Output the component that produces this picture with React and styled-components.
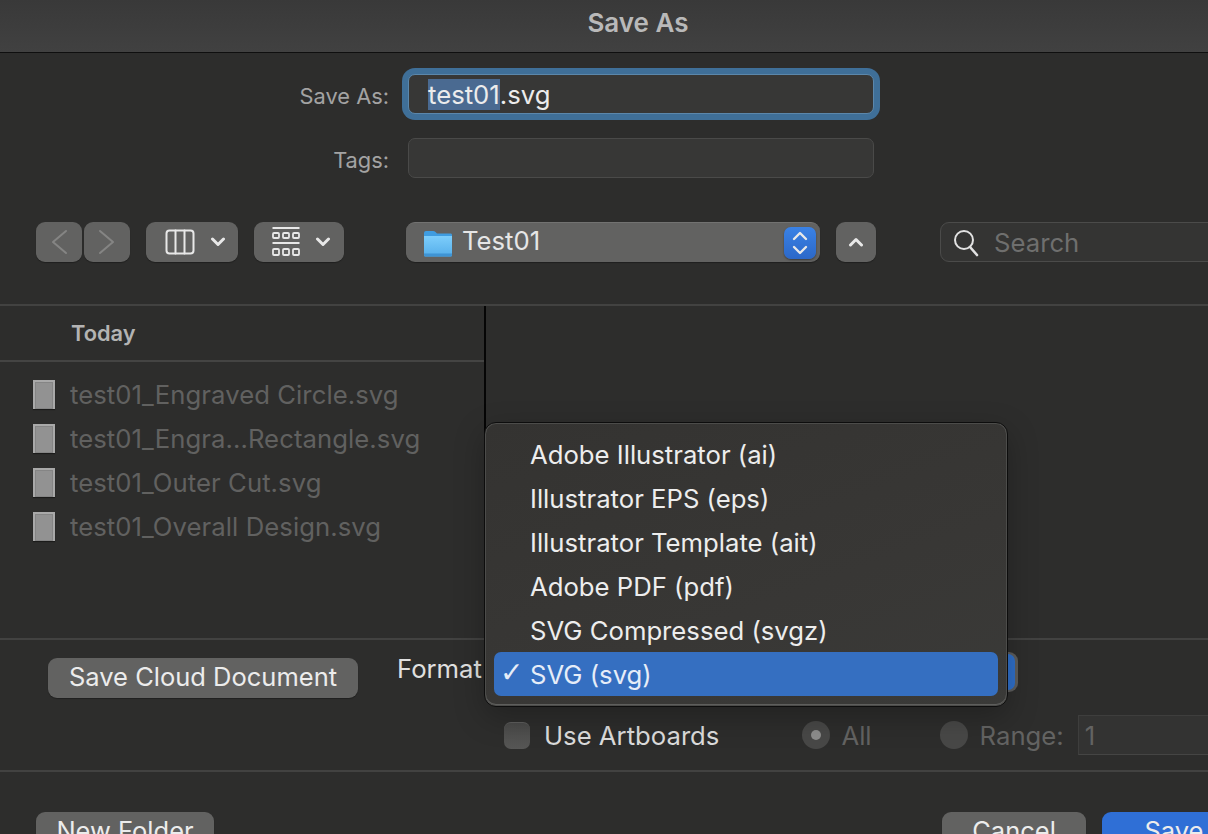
import React from "react";
import styled, { createGlobalStyle } from "styled-components";

const GlobalStyle = createGlobalStyle`
  html, body {
    margin: 0;
    padding: 0;
    background: #2d2d2c;
  }
  * {
    box-sizing: border-box;
  }
`;

const Dialog = styled.div`
  position: relative;
  width: 1208px;
  height: 834px;
  overflow: hidden;
  background: #2d2d2c;
  color: #e4e4e4;
  font-family: Inter, "Liberation Sans", sans-serif;
  font-size: 25.7px;
  white-space: nowrap;
`;

const TitleBar = styled.div`
  height: 53px;
  display: flex;
  align-items: center;
  justify-content: center;
  padding: 0 0 7px 68px;
  background: linear-gradient(#393939, #414141);
  border-bottom: 1px solid #0f0f0f;
  color: #b9b9b9;
  font-size: 26px;
  font-weight: 600;
`;

const FormRow = styled.div`
  display: flex;
  align-items: center;
  height: 40px;
  margin-top: ${(p) => p.$top}px;
`;

const FieldLabel = styled.div`
  width: 389px;
  padding-top: 3px;
  text-align: right;
  margin-right: 19px;
  color: #a3a3a3;
  font-size: 21.8px;
`;

const TextField = styled.div`
  width: 466px;
  height: 40px;
  display: flex;
  align-items: center;
  padding: 1px 0 0 19px;
  border-radius: 7px;
  background: #373736;
  border: 1px solid ${(p) => (p.$focus ? "#5b87ab" : "#4a4a49")};
  box-shadow: ${(p) => (p.$focus ? "0 0 0 6px #3f6f98" : "none")};
  color: #ececec;
`;

const Selected = styled.span`
  background: #4a6a91;
`;

const Toolbar = styled.div`
  display: flex;
  align-items: center;
  height: 40px;
  margin-top: 44px;
  padding-left: 36px;
`;

const ToolButton = styled.div`
  width: ${(p) => p.$w}px;
  height: 40px;
  margin-right: ${(p) => p.$gap || 0}px;
  padding-left: ${(p) => p.$shift || 0}px;
  flex: none;
  display: flex;
  align-items: center;
  justify-content: center;
  gap: ${(p) => p.$inner || 0}px;
  border-radius: 9px;
  background: #626261;
  box-shadow: 0 1px 1px rgba(0, 0, 0, 0.3);
`;

const PathSelect = styled.div`
  width: 414px;
  height: 40px;
  margin-right: 16px;
  flex: none;
  display: flex;
  align-items: center;
  padding: 0 4px 0 17px;
  border-radius: 9px;
  background: #626261;
  border-top: 1px solid #727271;
  box-shadow: 0 1px 1px rgba(0, 0, 0, 0.3);
`;

const PathName = styled.div`
  flex: 1;
  margin-left: 9px;
  margin-top: -4px;
  color: #e6e6e6;
`;

const Stepper = styled.div`
  width: 32px;
  height: 32px;
  display: flex;
  align-items: center;
  justify-content: center;
  border-radius: 7px;
  background: linear-gradient(#3a82e6, #2c68c8);
  box-shadow: 0 1px 2px rgba(0, 0, 0, 0.4);
`;

const SearchField = styled.div`
  width: 300px;
  height: 40px;
  margin-left: 64px;
  flex: none;
  display: flex;
  align-items: center;
  gap: 15px;
  padding: 1px 0 0 12px;
  border-radius: 9px;
  background: #343433;
  border: 1px solid #4b4b4a;
  color: #6f6f6e;
`;

const Separator = styled.div`
  height: 2px;
  background: #424241;
  margin-top: ${(p) => p.$top || 0}px;
`;

const Browser = styled.div`
  display: flex;
  height: 332px;
`;

const ListColumn = styled.div`
  width: 484px;
  flex: none;
`;

const ColumnDivider = styled.div`
  width: 2px;
  flex: none;
  background: #050505;
`;

const GroupHeader = styled.div`
  height: 56px;
  display: flex;
  align-items: center;
  padding-left: 71px;
  margin-bottom: 10px;
  border-bottom: 2px solid #444443;
  color: #b3b3b3;
  font-size: 21.8px;
  font-weight: 600;
`;

const FileRow = styled.div`
  height: 44px;
  display: flex;
  align-items: center;
  padding-left: 33px;
  gap: 15px;
  color: #616160;
  letter-spacing: 0.06px;
`;

const FileIcon = styled.div`
  width: 22px;
  height: 29px;
  padding: 2px;
  background: #a9a9a9;
  box-shadow: 0 1px 1px rgba(0, 0, 0, 0.4);

  &::before {
    content: "";
    display: block;
    height: 100%;
    background: #929292;
    border: 1px solid #858585;
  }
`;

const FormatRow = styled.div`
  display: flex;
  align-items: flex-start;
  height: 75px;
  padding-left: 48px;
  padding-top: 18px;
`;

const PlainButton = styled.div`
  width: ${(p) => p.$w}px;
  height: 40px;
  margin-left: ${(p) => p.$left || 0}px;
  padding-bottom: 3px;
  flex: none;
  display: flex;
  align-items: center;
  justify-content: center;
  border-radius: 9px;
  background: ${(p) => (p.$primary ? "#2f6fd6" : "#626261")};
  box-shadow: 0 1px 1px rgba(0, 0, 0, 0.3);
  color: #ececec;
  font-size: 25.5px;
`;

const FormatLabel = styled.div`
  margin-left: 39px;
  margin-top: -5px;
  color: #e0e0e0;
`;

const FormatSelect = styled.div`
  width: 528px;
  height: 40px;
  margin-left: 8px;
  margin-top: -6px;
  flex: none;
  display: flex;
  justify-content: flex-end;
  padding: 2px 3px 2px 0;
  border-radius: 9px;
  background: #5d5d5c;

  &::after {
    content: "";
    width: 30px;
    border-radius: 7px;
    background: #2f6fc9;
  }
`;

const OptionsRow = styled.div`
  display: flex;
  align-items: center;
  height: 40px;
  padding-left: 504px;
`;

const Checkbox = styled.div`
  width: 26px;
  height: 27px;
  flex: none;
  border-radius: 7px;
  background: linear-gradient(#4a4a49, #575756);
  border-top: 1px solid #5f5f5e;
`;

const OptionText = styled.div`
  margin-left: ${(p) => p.$left}px;
  color: ${(p) => (p.$dim ? "#636362" : "#dcdcdc")};
`;

const Radio = styled.div`
  width: 28px;
  height: 28px;
  flex: none;
  margin-left: ${(p) => p.$left}px;
  display: flex;
  align-items: center;
  justify-content: center;
  border-radius: 50%;
  background: #484847;

  &::after {
    content: "";
    width: 10px;
    height: 10px;
    border-radius: 50%;
    background: ${(p) => (p.$on ? "#8d8d8c" : "transparent")};
  }
`;

const RangeInput = styled.div`
  width: 160px;
  height: 40px;
  flex: none;
  margin-left: 14px;
  padding-left: 6px;
  display: flex;
  align-items: center;
  background: #333332;
  border-top: 1px solid #3e3e3d;
  border-bottom: 1px solid #454544;
  border-left: 1px solid #3e3e3d;
  color: #636362;
`;

const ActionRow = styled.div`
  display: flex;
  align-items: flex-start;
  padding: 40px 0 0 36px;
`;

const Popup = styled.div`
  position: absolute;
  left: 484px;
  top: 422px;
  width: 524px;
  height: 285px;
  padding: 9px 9px;
  border-radius: 12px;
  background: linear-gradient(160deg, #343331, #383735 60%, #3a3a38);
  border: 1px solid #0d0d0d;
  box-shadow: inset 0 0 0 1px #4c4c4a, inset 0 -1px 0 1px #5e5e5c, 0 10px 30px rgba(0, 0, 0, 0.25);
`;

const PopupItem = styled.div`
  position: relative;
  height: 44px;
  display: flex;
  align-items: center;
  padding-left: 36px;
  border-radius: 7px;
  background: ${(p) => (p.$active ? "#356fc1" : "transparent")};
  color: ${(p) => (p.$active ? "#e6edf8" : "#ededed")};
`;

const CheckMark = styled.span`
  position: absolute;
  left: 6px;
  top: 4px;
  font-family: "DejaVu Sans", sans-serif;
  font-size: 28px;
`;

const Icon = styled.svg`
  display: block;
  flex: none;
  fill: none;
  stroke: ${(p) => p.$stroke || "#e8e8e8"};
  stroke-width: ${(p) => p.$weight || 2};
  stroke-linecap: round;
  stroke-linejoin: round;
`;

const FolderSvg = styled.svg`
  display: block;
  flex: none;
`;

const Chevron = ({ dir }) => (
  <Icon width="20" height="28" viewBox="0 0 20 28" $stroke="#858584" $weight={2}>
    <path d={dir === "left" ? "M17 3 4 14l13 11" : "M3 3l13 11L3 25"} />
  </Icon>
);

const SmallChevron = ({ up }) => (
  <Icon width="16" height="10" viewBox="0 0 16 10" $weight={3}>
    <path d={up ? "M2.5 8 8 2.5 13.5 8" : "M2.5 2 8 7.5 13.5 2"} />
  </Icon>
);

const ColumnsIcon = () => (
  <Icon width="30" height="26" viewBox="0 0 30 26" $weight={2}>
    <rect x="1.5" y="1.5" width="27" height="23" rx="3" />
    <path d="M10.5 1.5v23M19.5 1.5v23" />
  </Icon>
);

const GalleryIcon = () => (
  <Icon width="28" height="30" viewBox="0 0 28 30" $weight={1.8}>
    <path d="M0.5 1h27M0.5 16h27" strokeWidth="2" strokeLinecap="butt" />
    <rect x="1" y="6" width="6" height="5" rx="1" />
    <rect x="11" y="6" width="6" height="5" rx="1" />
    <rect x="21" y="6" width="6" height="5" rx="1" />
    <rect x="1" y="22" width="6" height="6" rx="1" />
    <rect x="11" y="22" width="6" height="6" rx="1" />
    <rect x="21" y="22" width="6" height="6" rx="1" />
  </Icon>
);

const FolderIcon = () => (
  <FolderSvg width="30" height="28" viewBox="0 0 30 28">
    <defs>
      <linearGradient id="folderFill" x1="0" y1="0" x2="0" y2="1">
        <stop offset="0" stopColor="#7dcdfb" />
        <stop offset="1" stopColor="#55aeea" />
      </linearGradient>
    </defs>
    <path d="M1 4q0-2 2-2h7q1.500 0 2.500 1l1.500 1.500H28q1 0 1 1.500v3H1z" fill="#3f9ce0" />
    <path d="M1 7h28v19q0 1.500-1.500 1.500h-25Q1 27.500 1 26z" fill="url(#folderFill)" />
    <path d="M1 24.500h28V26q0 1.500-1.500 1.500h-25Q1 27.500 1 26z" fill="#3f94d4" />
  </FolderSvg>
);

const SearchIcon = () => (
  <Icon width="26" height="28" viewBox="0 0 26 28" $stroke="#e2e2e2" $weight={2}>
    <circle cx="11" cy="11" r="9" />
    <path d="M17 18l7 8" strokeWidth="2.6" />
  </Icon>
);

const files = [
  "test01_Engraved Circle.svg",
  "test01_Engra...Rectangle.svg",
  "test01_Outer Cut.svg",
  "test01_Overall Design.svg",
];

const formats = [
  "Adobe Illustrator (ai)",
  "Illustrator EPS (eps)",
  "Illustrator Template (ait)",
  "Adobe PDF (pdf)",
  "SVG Compressed (svgz)",
  "SVG (svg)",
];

export default function App() {
  return (
    <Dialog>
      <GlobalStyle />
      <TitleBar>Save As</TitleBar>

      <FormRow $top={21}>
        <FieldLabel>Save As:</FieldLabel>
        <TextField $focus>
          <span>
            <Selected>test01</Selected>.svg
          </span>
        </TextField>
      </FormRow>
      <FormRow $top={24}>
        <FieldLabel>Tags:</FieldLabel>
        <TextField />
      </FormRow>

      <Toolbar>
        <ToolButton $w={46} $gap={2}>
          <Chevron dir="left" />
        </ToolButton>
        <ToolButton $w={46} $gap={16}>
          <Chevron dir="right" />
        </ToolButton>
        <ToolButton $w={92} $gap={16} $inner={15} $shift={6}>
          <ColumnsIcon />
          <SmallChevron />
        </ToolButton>
        <ToolButton $w={90} $gap={62} $inner={15} $shift={5}>
          <GalleryIcon />
          <SmallChevron />
        </ToolButton>
        <PathSelect>
          <FolderIcon />
          <PathName>Test01</PathName>
          <Stepper>
            <Icon width="18" height="26" viewBox="0 0 18 26" $weight={2.4}>
              <path d="M3 9l6-6 6 6M3 17l6 6 6-6" />
            </Icon>
          </Stepper>
        </PathSelect>
        <ToolButton $w={40}>
          <SmallChevron up />
        </ToolButton>
        <SearchField>
          <SearchIcon />
          Search
        </SearchField>
      </Toolbar>

      <Separator $top={42} />

      <Browser>
        <ListColumn>
          <GroupHeader>Today</GroupHeader>
          {files.map((name) => (
            <FileRow key={name}>
              <FileIcon />
              {name}
            </FileRow>
          ))}
        </ListColumn>
        <ColumnDivider />
      </Browser>

      <Separator />

      <FormatRow>
        <PlainButton $w={310}>Save Cloud Document</PlainButton>
        <FormatLabel>Format</FormatLabel>
        <FormatSelect />
      </FormatRow>

      <OptionsRow>
        <Checkbox />
        <OptionText $left={14}>Use Artboards</OptionText>
        <Radio $left={83} $on />
        <OptionText $left={11} $dim>
          All
        </OptionText>
        <Radio $left={68} />
        <OptionText $left={12} $dim>
          Range:
        </OptionText>
        <RangeInput>1</RangeInput>
      </OptionsRow>

      <Separator $top={15} />

      <ActionRow>
        <PlainButton $w={178}>New Folder</PlainButton>
        <PlainButton $w={144} $left={728}>
          Cancel
        </PlainButton>
        <PlainButton $w={144} $left={16} $primary>
          Save
        </PlainButton>
      </ActionRow>

      <Popup>
        {formats.map((name) => {
          const active = name === "SVG (svg)";
          return (
            <PopupItem key={name} $active={active}>
              {active && <CheckMark>✓</CheckMark>}
              {name}
            </PopupItem>
          );
        })}
      </Popup>
    </Dialog>
  );
}
